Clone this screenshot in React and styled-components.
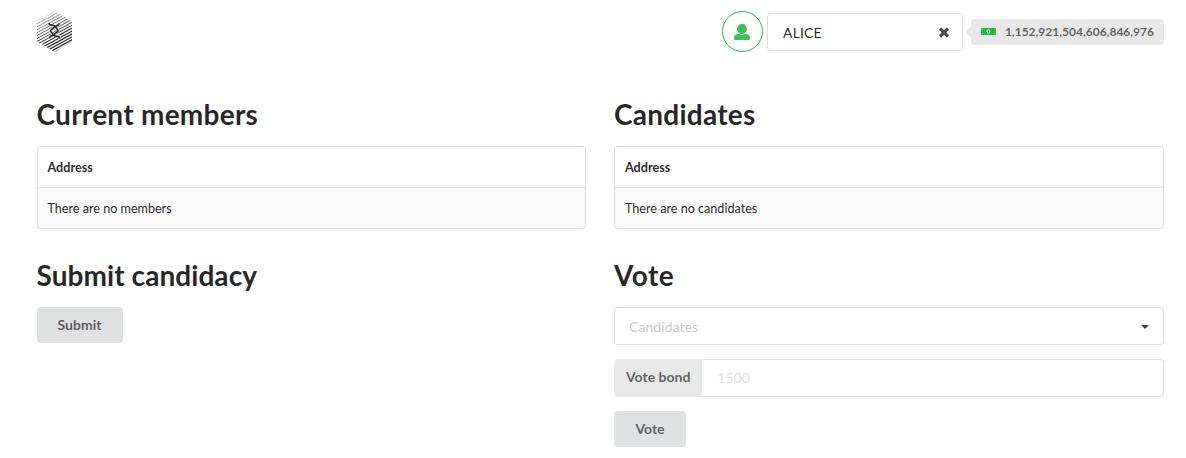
import React from "react";
import styled, { createGlobalStyle, css } from "styled-components";

const Global = createGlobalStyle`
  *, *::before, *::after { box-sizing: border-box; }
  body {
    margin: 0;
    background: #fff;
    color: rgba(0, 0, 0, 0.87);
    font: 14px/1.4285em Lato, "Liberation Sans", sans-serif;
  }
  input, button { font-family: inherit; }
`;

const Page = styled.main`
  padding: 11px 22px 0 36.5px;
`;

const TopBar = styled.header`
  display: flex;
  align-items: center;
  justify-content: space-between;
  height: 41px;
`;

const LogoSvg = styled.svg`
  display: block;
  width: 35px;
  height: 41px;
  margin-left: 0.5px;
`;

const Account = styled.div`
  display: flex;
  align-items: center;
`;

const Avatar = styled.div`
  display: flex;
  align-items: center;
  justify-content: center;
  width: 41px;
  height: 41px;
  margin-right: 4px;
  padding-right: 1px;
  border: 1px solid #21ba45;
  border-radius: 50%;
  color: #3bc05a;
`;

const Icon = styled.svg`
  display: block;
  fill: currentColor;
  width: ${(p) => p.$w}px;
  height: ${(p) => p.$h}px;
`;

const outlined = css`
  height: 38px;
  border: 1px solid rgba(34, 36, 38, 0.15);
  border-radius: 4px;
  background: #fff;
`;

const AccountSelect = styled.div`
  ${outlined}
  display: flex;
  align-items: center;
  justify-content: space-between;
  width: 196px;
  padding: 0 13px 0 15px;
  color: rgba(0, 0, 0, 0.87);
  letter-spacing: 0.15px;
  svg { color: #4a4a4a; margin-top: 1px; }
`;

const SelectedName = styled.span`
  padding-top: 2px;
`;

const Balance = styled.div`
  position: relative;
  display: flex;
  align-items: center;
  width: 193px;
  height: 26px;
  margin-left: 8px;
  padding: 0 10px;
  border-radius: 4px;
  background: #e8e8e8;
  color: rgba(0, 0, 0, 0.6);
  font-size: 12px;
  font-weight: 700;
  line-height: 12px;
  white-space: nowrap;
  svg { color: #21ba45; margin-right: 9px; }
  &::before {
    content: "";
    position: absolute;
    left: -4px;
    top: 9px;
    width: 8px;
    height: 8px;
    background: inherit;
    transform: rotate(45deg);
  }
`;

const Columns = styled.div`
  display: grid;
  grid-template-columns: 549.5px 550px;
  column-gap: 28px;
`;

const Section = styled.section`
  padding-top: ${(p) => p.$top}px;
`;

const Title = styled.h1`
  margin: 0 0 14px;
  font-size: 28px;
  font-weight: 700;
  line-height: 36px;
  letter-spacing: ${(p) => p.$spacing}px;
`;

const Table = styled.table`
  width: 100%;
  border: 1px solid rgba(34, 36, 38, 0.15);
  border-radius: 4px;
  border-collapse: separate;
  border-spacing: 0;
  font-size: 12.6px;
  line-height: 18px;
  text-align: left;
`;

const HeadCell = styled.th`
  height: 40px;
  padding: 2px 10px 0;
  font-weight: 700;
`;

const Cell = styled.td`
  height: 41px;
  padding: 2px 10px 0;
  border-top: 1px solid rgba(34, 36, 38, 0.1);
  border-radius: 0 0 4px 4px;
  background: #fafafb;
`;

const Button = styled.button`
  display: block;
  width: ${(p) => p.$width}px;
  height: 36px;
  padding: 0 0 1px;
  border: 0;
  border-radius: 4px;
  background: #e0e1e2;
  color: rgba(0, 0, 0, 0.6);
  font-size: 14px;
  font-weight: 700;
  line-height: 14px;
`;

const Dropdown = styled.div`
  ${outlined}
  display: flex;
  align-items: center;
  justify-content: space-between;
  margin-bottom: 14px;
  padding: 0 14px;
  color: rgba(191, 191, 191, 0.87);
  letter-spacing: 0.08px;
  svg { color: #404040; margin-top: 1px; }
`;

const DropdownText = styled.span`
  padding-top: 2px;
`;

const Field = styled.div`
  display: flex;
  height: 38px;
  margin-bottom: 14px;
`;

const FieldLabel = styled.label`
  padding: 11px 12px;
  border-radius: 4px 0 0 4px;
  background: #e8e8e8;
  color: rgba(0, 0, 0, 0.6);
  font-weight: 700;
  line-height: 14px;
`;

const Input = styled.input`
  ${outlined}
  flex: 1;
  min-width: 0;
  padding: 0 14px 1px;
  border-left-color: transparent;
  border-radius: 0 4px 4px 0;
  font-size: 14px;
  &::placeholder { color: rgba(191, 191, 191, 0.5); }
`;

const stripes = Array.from({ length: 20 }, (_, i) => i);

const strand = "M11.8 11.8c.4 2.6 2.2 2.2 4.2 2.4 1.6.2 2.4 1.5 3.2 2.7l2 2.6c-1 1.8-3 3-4.6 4.2-1.5 1-3.3 1.2-4.4 3.4";

function Logo() {
  return (
    <LogoSvg viewBox="0 0 35 41" role="img" aria-label="Substrate">
      <defs>
        <clipPath id="hex">
          <path d="M17.5 .3 35 10.4v20.2L17.5 40.7 0 30.6V10.4z" />
        </clipPath>
      </defs>
      <g clipPath="url(#hex)" stroke="#222">
        {stripes.map((i) => (
          <path
            key={i}
            d={`M-1 ${10.5 + i * 2.92}L36 ${-9.7 + i * 2.92}`}
            strokeWidth={Math.min(1.2, 0.35 + i * 0.075)}
          />
        ))}
      </g>
      {[["#fff", 2.6], ["#222", 1.6]].map(([color, width]) => (
        <g key={color} fill="none" stroke={color} strokeWidth={width}>
          <path d={strand} />
          <path d={strand} transform="rotate(180 17.3 19.7)" />
        </g>
      ))}
    </LogoSvg>
  );
}

function AddressTable({ children }) {
  return (
    <Table>
      <thead><tr><HeadCell>Address</HeadCell></tr></thead>
      <tbody><tr><Cell>{children}</Cell></tr></tbody>
    </Table>
  );
}

export default function App() {
  return (
    <>
      <Global />
      <Page>
        <TopBar>
          <Logo />
          <Account>
            <Avatar>
              <Icon $w={16} $h={16} viewBox="0 0 512 512">
                <path d="M256 0c88.366 0 160 71.634 160 160s-71.634 160-160 160S96 248.366 96 160 167.634 0 256 0zm183.283 333.821l-71.313-17.828c-74.923 53.89-165.738 41.864-223.94 0l-71.313 17.828C29.981 344.505 0 382.903 0 426.955V464c0 26.51 21.49 48 48 48h416c26.51 0 48-21.49 48-48v-37.045c0-44.052-29.981-82.45-72.717-93.134z" />
              </Icon>
            </Avatar>
            <AccountSelect>
              <SelectedName>ALICE</SelectedName>
              <Icon $w={10} $h={13} viewBox="0 0 384 512">
                <path d="M323.1 441l53.9-53.9c9.4-9.4 9.4-24.5 0-33.9L279.8 256l97.2-97.2c9.4-9.4 9.4-24.5 0-33.9L323.1 71c-9.4-9.4-24.5-9.4-33.9 0L192 168.2 94.8 71c-9.4-9.4-24.5-9.4-33.9 0L7 124.9c-9.4 9.4-9.4 24.5 0 33.9l97.2 97.2L7 353.2c-9.4 9.4-9.4 24.5 0 33.9L60.9 441c9.4 9.4 24.5 9.4 33.9 0l97.2-97.2 97.2 97.2c9.3 9.3 24.5 9.3 33.9 0z" />
              </Icon>
            </AccountSelect>
            <Balance>
              <Icon $w={15} $h={7} viewBox="0 0 15 7">
                <path fillRule="evenodd" d="M.5 0h14q.5 0 .5.5v6q0 .5-.5.5H.5Q0 7 0 6.5v-6Q0 0 .5 0zM1 1v.8q.8 0 .8-.8zm12.2 0q0 .8.8.8V1zM1 5.2V6h.8q0-.8-.8-.8zm13 0q-.8 0-.8.8h.8zM7.5 1.2C6.4 1.2 5.7 2.2 5.7 3.5s.7 2.3 1.8 2.3 1.8-1 1.8-2.3-.7-2.3-1.8-2.3zM7 2.2h1v2.6H7z" />
              </Icon>
              1,152,921,504,606,846,976
            </Balance>
          </Account>
        </TopBar>
        <Columns>
          <Section $top={44}>
            <Title $spacing={0.26}>Current members</Title>
            <AddressTable>There are no members</AddressTable>
          </Section>
          <Section $top={44}>
            <Title $spacing={0.26}>Candidates</Title>
            <AddressTable>There are no candidates</AddressTable>
          </Section>
          <Section $top={28}>
            <Title $spacing={0.07}>Submit candidacy</Title>
            <Button $width={86}>Submit</Button>
          </Section>
          <Section $top={28}>
            <Title $spacing={0.5}>Vote</Title>
            <Dropdown>
              <DropdownText>Candidates</DropdownText>
              <Icon $w={8} $h={4} viewBox="0 0 8 4"><path d="M0 0h8L4 4z" /></Icon>
            </Dropdown>
            <Field>
              <FieldLabel htmlFor="bond">Vote bond</FieldLabel>
              <Input id="bond" placeholder="1500" />
            </Field>
            <Button $width={72}>Vote</Button>
          </Section>
        </Columns>
      </Page>
    </>
  );
}
